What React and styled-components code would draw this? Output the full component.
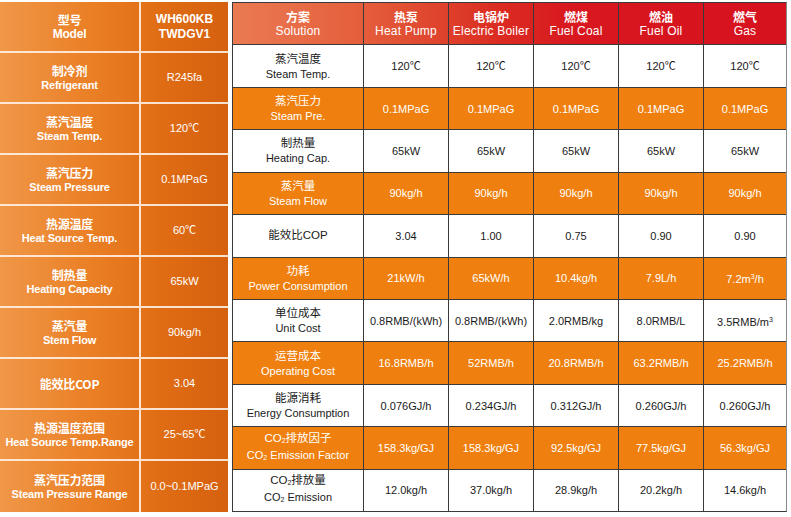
import React from "react";
import styled, { createGlobalStyle } from "styled-components";

const GlobalStyle = createGlobalStyle`
  html, body {
    margin: 0;
    padding: 0;
    background: #fff;
  }
  body {
    font-family: "Liberation Sans", Arial, "Noto Sans CJK SC", sans-serif;
  }
`;

const Page = styled.div`
  display: flex;
  align-items: flex-start;
  gap: 4px;
  padding-top: 2px;
  width: 791px;
  height: 517px;
  box-sizing: border-box;
`;

/* left spec card */
const SpecPanel = styled.div`
  width: 228px;
  height: 510px;
  display: grid;
  grid-template-columns: 141px 87px;
  grid-template-rows: repeat(10, 1fr);
  background: linear-gradient(90deg, #f09748 0%, #ea7f25 40%, #e06d14 70%, #d5600f 100%);
  color: #fff;
`;

const SpecCell = styled.div`
  display: flex;
  flex-direction: column;
  align-items: center;
  justify-content: center;
  text-align: center;
  border-bottom: ${p => (p.$last ? "none" : "2px solid rgba(255, 240, 228, 0.9)")};
  border-right: ${p => (p.$label ? "2px solid rgba(255, 240, 228, 0.9)" : "none")};
  font-size: ${p => (p.$head ? "12px" : "11px")};
  font-weight: ${p => (p.$label || p.$head ? "bold" : "normal")};
  line-height: 15px;
  letter-spacing: ${p => (p.$label ? "-0.2px" : "0")};
  white-space: nowrap;
`;

const Cn = styled.span`
  font-family: "Noto Sans CJK SC", sans-serif;
  font-size: 12px;
  line-height: 15px;
`;

/* right comparison table */
const Table = styled.div`
  width: 555px;
  height: 510px;
  display: flex;
  flex-direction: column;
  border: 1px solid #3a3a3a;
  border-right-color: #8a8a8a;
  box-sizing: border-box;
`;

const Row = styled.div`
  flex: 1;
  display: grid;
  grid-template-columns: 130px 85px 85px 85px 85px 1fr;
  background: ${p =>
    p.$head
      ? "linear-gradient(90deg, #ea7a52 0%, #e5603d 22%, #e04a30 34%, #db2c22 48%, #d8171f 62%, #d6121e 100%)"
      : p.$orange
      ? "#ef7f0e"
      : "#fff"};
  color: ${p => (p.$head || p.$orange ? "#fff" : "#1a1a1a")};
  border-top: ${p => (p.$head ? "none" : "1px solid #3a3a3a")};
`;

const Cell = styled.div`
  display: flex;
  flex-direction: column;
  align-items: center;
  justify-content: center;
  text-align: center;
  font-size: 11px;
  line-height: 14px;
  white-space: nowrap;
  border-left: ${p => (p.$first ? "none" : "1px solid #3a3a3a")};
`;

const HeadCn = styled.span`
  font-family: "Noto Sans CJK SC", sans-serif;
  font-weight: bold;
  font-size: 12px;
  line-height: 15px;
`;

const HeadEn = styled.span`
  font-size: 12px;
  line-height: 14px;
  letter-spacing: 0.2px;
`;

const LabelCn = styled.span`
  font-family: "Liberation Sans", "Noto Sans CJK SC", sans-serif;
  font-size: 11.5px;
  line-height: 15px;
`;

const Sub = styled.sub`
  font-size: 7px;
  vertical-align: -1px;
`;

const Sup = styled.sup`
  font-size: 7px;
  vertical-align: 4px;
`;

const specs = [
  { cn: "型号", en: "Model", val: <>WH600KB<br />TWDGV1</>, head: true },
  { cn: "制冷剂", en: "Refrigerant", val: "R245fa" },
  { cn: "蒸汽温度", en: "Steam Temp.", val: "120℃" },
  { cn: "蒸汽压力", en: "Steam Pressure", val: "0.1MPaG" },
  { cn: "热源温度", en: "Heat Source Temp.", val: "60℃" },
  { cn: "制热量", en: "Heating Capacity", val: "65kW" },
  { cn: "蒸汽量", en: "Stem Flow", val: "90kg/h" },
  { cn: "能效比COP", en: null, val: "3.04" },
  { cn: "热源温度范围", en: "Heat Source Temp.Range", val: "25~65℃" },
  { cn: "蒸汽压力范围", en: "Steam Pressure Range", val: "0.0~0.1MPaG" },
];

const heads = [
  ["方案", "Solution"],
  ["热泵", "Heat Pump"],
  ["电锅炉", "Electric  Boiler"],
  ["燃煤", "Fuel Coal"],
  ["燃油", "Fuel Oil"],
  ["燃气", "Gas"],
];

const CO2 = () => (
  <>
    CO<Sub>2</Sub>
  </>
);

const rows = [
  { cn: "蒸汽温度", en: "Steam Temp.", vals: ["120℃", "120℃", "120℃", "120℃", "120℃"] },
  { cn: "蒸汽压力", en: "Steam Pre.", vals: ["0.1MPaG", "0.1MPaG", "0.1MPaG", "0.1MPaG", "0.1MPaG"], orange: true },
  { cn: "制热量", en: "Heating Cap.", vals: ["65kW", "65kW", "65kW", "65kW", "65kW"] },
  { cn: "蒸汽量", en: "Steam Flow", vals: ["90kg/h", "90kg/h", "90kg/h", "90kg/h", "90kg/h"], orange: true },
  { cn: "能效比COP", en: null, vals: ["3.04", "1.00", "0.75", "0.90", "0.90"] },
  { cn: "功耗", en: "Power Consumption", vals: ["21kW/h", "65kW/h", "10.4kg/h", "7.9L/h", <>7.2m<Sup>3</Sup>/h</>], orange: true },
  { cn: "单位成本", en: "Unit Cost", vals: ["0.8RMB/(kWh)", "0.8RMB/(kWh)", "2.0RMB/kg", "8.0RMB/L", <>3.5RMB/m<Sup>3</Sup></>] },
  { cn: "运营成本", en: "Operating Cost", vals: ["16.8RMB/h", "52RMB/h", "20.8RMB/h", "63.2RMB/h", "25.2RMB/h"], orange: true },
  { cn: "能源消耗", en: "Energy Consumption", vals: ["0.076GJ/h", "0.234GJ/h", "0.312GJ/h", "0.260GJ/h", "0.260GJ/h"] },
  { cn: <><CO2 />排放因子</>, en: <><CO2 /> Emission Factor</>, vals: ["158.3kg/GJ", "158.3kg/GJ", "92.5kg/GJ", "77.5kg/GJ", "56.3kg/GJ"], orange: true },
  { cn: <><CO2 />排放量</>, en: <><CO2 /> Emission</>, vals: ["12.0kg/h", "37.0kg/h", "28.9kg/h", "20.2kg/h", "14.6kg/h"] },
];

export default function App() {
  return (
    <>
      <GlobalStyle />
      <Page>
        <SpecPanel>
          {specs.map((s, i) => (
            <React.Fragment key={i}>
              <SpecCell $label $head={s.head} $last={i === specs.length - 1}>
                <Cn>{s.cn}</Cn>
                {s.en && <span>{s.en}</span>}
              </SpecCell>
              <SpecCell $head={s.head} $last={i === specs.length - 1}>
                <span>{s.val}</span>
              </SpecCell>
            </React.Fragment>
          ))}
        </SpecPanel>

        <Table>
          <Row $head>
            {heads.map(([cn, en], i) => (
              <Cell key={i} $first={i === 0}>
                <HeadCn>{cn}</HeadCn>
                <HeadEn>{en}</HeadEn>
              </Cell>
            ))}
          </Row>
          {rows.map((r, i) => (
            <Row key={i} $orange={r.orange}>
              <Cell $first>
                <LabelCn>{r.cn}</LabelCn>
                {r.en && <span>{r.en}</span>}
              </Cell>
              {r.vals.map((v, j) => (
                <Cell key={j}>
                  <span>{v}</span>
                </Cell>
              ))}
            </Row>
          ))}
        </Table>
      </Page>
    </>
  );
}
